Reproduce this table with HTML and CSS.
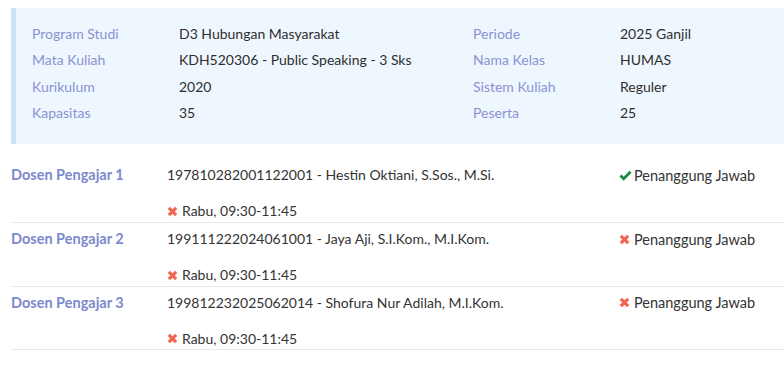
FILE: index.html
```html
<!DOCTYPE html>
<html>
<head>
<meta charset="utf-8">
<link rel="stylesheet" href="styles.css">
</head>
<body>
<div class="info">
  <div class="info-grid">
    <div class="lbl">Program Studi</div><div class="val">D3 Hubungan Masyarakat</div>
    <div class="lbl">Periode</div><div class="val">2025 Ganjil</div>
    <div class="lbl">Mata Kuliah</div><div class="val">KDH520306 - Public Speaking - 3 Sks</div>
    <div class="lbl">Nama Kelas</div><div class="val">HUMAS</div>
    <div class="lbl">Kurikulum</div><div class="val">2020</div>
    <div class="lbl">Sistem Kuliah</div><div class="val">Reguler</div>
    <div class="lbl">Kapasitas</div><div class="val">35</div>
    <div class="lbl">Peserta</div><div class="val">25</div>
  </div>
</div>

<div class="dosen">
  <div class="row">
    <div class="d-lbl">Dosen Pengajar 1</div>
    <div class="d-main">
      <div class="line">197810282001122001 - Hestin Oktiani, S.Sos., M.Si.</div>
      <div class="line sched"><svg class="ic" viewBox="0 0 12 12"><path d="M2 2 L10 10 M10 2 L2 10" class="x"/></svg>Rabu, 09:30-11:45</div>
    </div>
    <div class="d-status"><svg class="ic ic-ok" viewBox="0 0 14 12"><path d="M1.5 6 L5 9.5 L12.5 2" class="ok"/></svg>Penanggung Jawab</div>
  </div>
  <div class="row">
    <div class="d-lbl">Dosen Pengajar 2</div>
    <div class="d-main">
      <div class="line">199111222024061001 - Jaya Aji, S.I.Kom., M.I.Kom.</div>
      <div class="line sched"><svg class="ic" viewBox="0 0 12 12"><path d="M2 2 L10 10 M10 2 L2 10" class="x"/></svg>Rabu, 09:30-11:45</div>
    </div>
    <div class="d-status"><svg class="ic" viewBox="0 0 12 12"><path d="M2 2 L10 10 M10 2 L2 10" class="x"/></svg>Penanggung Jawab</div>
  </div>
  <div class="row">
    <div class="d-lbl">Dosen Pengajar 3</div>
    <div class="d-main">
      <div class="line">199812232025062014 - Shofura Nur Adilah, M.I.Kom.</div>
      <div class="line sched"><svg class="ic" viewBox="0 0 12 12"><path d="M2 2 L10 10 M10 2 L2 10" class="x"/></svg>Rabu, 09:30-11:45</div>
    </div>
    <div class="d-status"><svg class="ic" viewBox="0 0 12 12"><path d="M2 2 L10 10 M10 2 L2 10" class="x"/></svg>Penanggung Jawab</div>
  </div>
</div>
</body>
</html>
```
FILE: styles.css
```css
* { box-sizing: border-box; }
body {
  margin: 0;
  padding: 8px 0 0 11px;
  font-family: "Lato", "Liberation Sans", sans-serif;
  font-size: 14px;
  color: #333;
  background: #fff;
}
.info {
  background: #eff7fe;
  border-left: 5px solid #cfe3f3;
  padding: 12px 16px 18px 16px;
}
.info-grid {
  display: grid;
  grid-template-columns: 147px 294px 147px 1fr;
  grid-auto-rows: 26.5px;
  align-items: center;
}
.lbl { color: #8a92d4; }
.val { color: #2e2e2e; }

.dosen { margin-top: 15px; }
.row {
  display: flex;
  border-bottom: 1px solid #e8e8e8;
  padding-top: 6px;
  height: 64px;
}
.row + .row { height: 63.5px; }
.d-lbl {
  width: 156px;
  font-weight: bold;
  color: #7c88cf;
  line-height: 20px;
  font-size: 14.5px;
}
.d-main {
  width: 452px;
}
.line { line-height: 20px; height: 20px; }
.sched { margin-top: 16px; display: flex; align-items: center; }
.d-status {
  display: flex;
  align-items: center;
  height: 20px;
  font-size: 14.5px;
}
.ic {
  width: 11px;
  height: 11px;
  margin-right: 4px;
  flex: none;
}
.ic-ok { width: 13px; margin-right: 2px; }
.x { stroke: #f26450; stroke-width: 3.4; fill: none; }
.ok { stroke: #1b8a4a; stroke-width: 3.2; fill: none; }
```
